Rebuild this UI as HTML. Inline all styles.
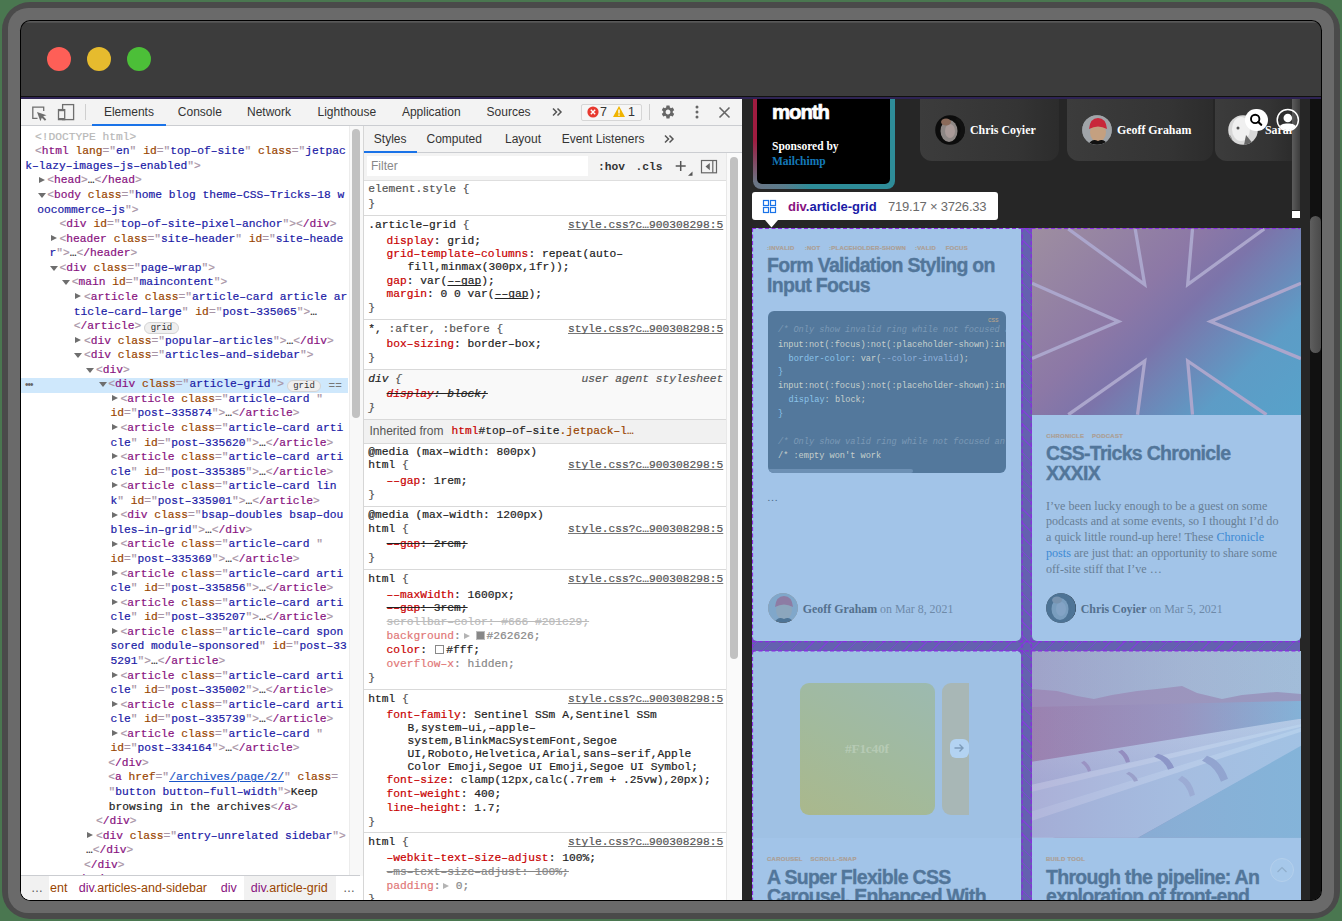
<!DOCTYPE html><html><head><meta charset="utf-8"><style>
*{box-sizing:border-box;margin:0;padding:0}
html,body{width:1342px;height:921px;overflow:hidden;background:#4a7750;position:relative;font-family:"Liberation Sans",sans-serif}
.abs{position:absolute}
.mono{font-family:"Liberation Mono",monospace}
.serif{font-family:"Liberation Serif",serif}
.ln{position:absolute;white-space:pre;font-family:"Liberation Mono",monospace;font-size:11.25px;line-height:14px;height:14px;color:#222;-webkit-text-stroke:0.2px currentColor}
.t{color:#a894a6}.n{color:#881280}.a{color:#994500}.v{color:#1a1aa6}.x{color:#222}
.tri{position:absolute;width:0;height:0}
.tr{border-top:3.6px solid transparent;border-bottom:3.6px solid transparent;border-left:6.4px solid #6e6e6e}
.td{border-left:4.2px solid transparent;border-right:4.2px solid transparent;border-top:5.6px solid #6e6e6e}
.sl{position:absolute;white-space:pre;font-family:"Liberation Mono",monospace;font-size:11.25px;line-height:14px;height:14px;color:#222;-webkit-text-stroke:0.2px currentColor}
.p{color:#c80000}
.lk{color:#545454;text-decoration:underline;text-decoration-color:#777;text-decoration-skip-ink:none}
.dim{opacity:.55}
.st{text-decoration:line-through}
.div{position:absolute;left:364px;width:362px;height:1px;background:#d9d9d9}
.badge{display:inline-block;font-family:"Liberation Mono",monospace;font-size:9px;line-height:10px;padding:0 5.3px;border:1px solid #d4d4d4;border-radius:6px;background:#efefef;color:#333;margin-left:3px;vertical-align:-0.5px;-webkit-text-stroke:0}
.tab{position:absolute;font-size:12px;line-height:14px;color:#333;white-space:pre}
.d{color:#b8b8b8}.lnk{color:#1a55c8;text-decoration:underline}.g{color:#555}.ul{text-decoration:underline;text-decoration-skip-ink:none}.sw{display:inline-block;width:9px;height:9px;border:1px solid #888;vertical-align:-1px;margin-right:2px}.tri2{display:inline-block;width:0;height:0;border-top:3.5px solid transparent;border-bottom:3.5px solid transparent;border-left:6px solid #777;margin:0 2px 0 1px;vertical-align:0px}</style></head><body><div class="abs" style="left:2px;top:2px;width:1338px;height:917px;background:#4a4a4a;border-radius:28px"></div><div class="abs" style="left:8px;top:8px;width:1326px;height:905px;background:#6a6a6a;border-radius:20px"></div><div class="abs" style="left:20px;top:20px;width:1302px;height:881px;background:#000;border-radius:10.5px"></div><div class="abs" style="left:21px;top:21px;width:1300px;height:879px;background:#3c3c3c;border-radius:9.5px;overflow:hidden"><div class="abs" style="left:26px;top:26px;width:24px;height:24px;border-radius:50%;background:#fe5f57"></div><div class="abs" style="left:66px;top:26px;width:24px;height:24px;border-radius:50%;background:#e6bb2e"></div><div class="abs" style="left:106px;top:26px;width:24px;height:24px;border-radius:50%;background:#4cbf38"></div><div class="abs" style="left:0;top:0;width:1300px;height:1.5px;background:linear-gradient(#5e5e5e,#4a4a4a)"></div></div><div class="abs" style="left:21px;top:21px;width:1300px;height:879px;border-radius:9.5px;overflow:hidden;pointer-events:none"><div class="abs" style="left:-21px;top:-21px;width:1342px;height:921px"><div class="abs" style="left:21px;top:96px;width:1300px;height:1px;background:#111"></div><div class="abs" style="left:21px;top:97px;width:1300px;height:2px;background:#2e2354"></div><div class="abs" style="left:21px;top:99px;width:721px;height:802px;background:#fff"></div><div class="abs" style="left:21px;top:99px;width:721px;height:27px;background:#f3f3f3;border-bottom:1px solid #cbcdd1"></div><svg class="abs" style="left:28px;top:101px" width="22" height="22" viewBox="0 0 22 22">
<path d="M9.5 17.4 H4.8 V6.2 H15.7 V10" fill="none" stroke="#6e6e6e" stroke-width="1.3"/>
<path d="M9 11 L18.5 14.2 L15.2 15.3 L18.3 18.4 L16.9 19.8 L13.8 16.7 L12.4 20.2 Z" fill="#6e6e6e"/>
</svg><svg class="abs" style="left:55px;top:101px" width="22" height="22" viewBox="0 0 22 22">
<rect x="7.6" y="3.6" width="11" height="15" fill="none" stroke="#6e6e6e" stroke-width="1.3"/>
<rect x="3.5" y="8.6" width="6.2" height="10" fill="#f3f3f3" stroke="#6e6e6e" stroke-width="1.3"/>
<rect x="3.5" y="8.6" width="6.2" height="1.6" fill="#6e6e6e"/><rect x="3.5" y="17" width="6.2" height="1.6" fill="#6e6e6e"/>
</svg><div class="abs" style="left:85px;top:104px;width:1px;height:16px;background:#cfcfcf"></div><div class="tab" style="left:103.9px;top:105px">Elements</div><div class="tab" style="left:177.8px;top:105px">Console</div><div class="tab" style="left:247px;top:105px">Network</div><div class="tab" style="left:317.5px;top:105px">Lighthouse</div><div class="tab" style="left:401.9px;top:105px">Application</div><div class="tab" style="left:486.6px;top:105px">Sources</div><div class="abs" style="left:92px;top:124px;width:74px;height:2px;background:#1a73e8"></div><svg class="abs" style="left:551px;top:106px" width="12" height="12" viewBox="0 0 12 12"><path d="M2 2.5 L5.5 6 L2 9.5 M6.5 2.5 L10 6 L6.5 9.5" fill="none" stroke="#555" stroke-width="1.5"/></svg><div class="abs" style="left:581px;top:103.5px;width:61px;height:17px;border:1px solid #d6d6d6;border-radius:2px;background:#f6f6f6"></div><svg class="abs" style="left:587px;top:106px" width="12" height="12" viewBox="0 0 12 12"><circle cx="6" cy="6" r="5.6" fill="#e8392f"/><path d="M3.8 3.8 L8.2 8.2 M8.2 3.8 L3.8 8.2" stroke="#fff" stroke-width="1.4"/></svg><div class="tab" style="left:600px;top:105px;font-size:12.5px;color:#333">7</div><svg class="abs" style="left:612px;top:105px" width="14" height="13" viewBox="0 0 14 13"><path d="M7 1 L13 12 H1 Z" fill="#f0b400"/><rect x="6.3" y="4.5" width="1.4" height="4" fill="#fff"/><rect x="6.3" y="9.4" width="1.4" height="1.4" fill="#fff"/></svg><div class="tab" style="left:628px;top:105px;font-size:12.5px;color:#333">1</div><div class="abs" style="left:649px;top:104px;width:1px;height:16px;background:#cfcfcf"></div><svg class="abs" style="left:660px;top:104px" width="16" height="16" viewBox="0 0 24 24"><path fill="#666" d="M19.14 12.94c.04-.3.06-.61.06-.94 0-.32-.02-.64-.07-.94l2.03-1.58a.49.49 0 0 0 .12-.61l-1.92-3.32a.488.488 0 0 0-.59-.22l-2.39.96c-.5-.38-1.03-.7-1.62-.94l-.36-2.54a.484.484 0 0 0-.48-.41h-3.84c-.24 0-.43.17-.47.41l-.36 2.54c-.59.24-1.13.57-1.62.94l-2.39-.96c-.22-.08-.47 0-.59.22L2.74 8.87c-.12.21-.08.47.12.61l2.03 1.58c-.05.3-.09.63-.09.94s.02.64.07.94l-2.03 1.58a.49.49 0 0 0-.12.61l1.92 3.32c.12.22.37.29.59.22l2.39-.96c.5.38 1.03.7 1.62.94l.36 2.54c.05.24.24.41.48.41h3.84c.24 0 .44-.17.47-.41l.36-2.54c.59-.24 1.13-.56 1.62-.94l2.39.96c.22.08.47 0 .59-.22l1.92-3.32c.12-.22.07-.47-.12-.61l-2.01-1.58zM12 15.6c-1.98 0-3.6-1.62-3.6-3.6s1.62-3.6 3.6-3.6 3.6 1.62 3.6 3.6-1.62 3.6-3.6 3.6z"/></svg><svg class="abs" style="left:693px;top:104px" width="8" height="16" viewBox="0 0 8 16"><circle cx="4" cy="3" r="1.5" fill="#666"/><circle cx="4" cy="8" r="1.5" fill="#666"/><circle cx="4" cy="13" r="1.5" fill="#666"/></svg><svg class="abs" style="left:718px;top:106px" width="13" height="13" viewBox="0 0 13 13"><path d="M1.5 1.5 L11.5 11.5 M11.5 1.5 L1.5 11.5" stroke="#666" stroke-width="1.6"/></svg><div class="abs" style="left:21px;top:378px;width:327px;height:15px;background:#cfe8fc"></div><div class="abs" style="left:25px;top:379px;font-size:10px;line-height:12px;color:#666;letter-spacing:-1px">•••</div><div class="ln" style="left:35px;top:129.80px"><span class="d">&lt;!DOCTYPE html&gt;</span></div><div class="ln" style="left:35px;top:144.36px"><span class="t">&lt;</span><span class="n">html</span> <span class="a">lang</span><span class="t">=&quot;</span><span class="v">en</span><span class="t">&quot;</span> <span class="a">id</span><span class="t">=&quot;</span><span class="v">top–of–site</span><span class="t">&quot;</span> <span class="a">class</span><span class="t">=&quot;</span><span class="v">jetpac</span></div><div class="ln" style="left:25.2px;top:158.92px"><span class="v">k–lazy–images–js–enabled</span><span class="t">&quot;&gt;</span></div><div class="ln" style="left:47.2px;top:173.48px"><span class="t">&lt;</span><span class="n">head</span><span class="t">&gt;</span><span class="x">…</span><span class="t">&lt;</span><span class="n">/head</span><span class="t">&gt;</span></div><div class="tri tr" style="left:38.6px;top:176.68px"></div><div class="ln" style="left:47.2px;top:188.04px"><span class="t">&lt;</span><span class="n">body</span> <span class="a">class</span><span class="t">=&quot;</span><span class="v">home blog theme–CSS–Tricks–18 w</span></div><div class="tri td" style="left:37.6px;top:192.84px"></div><div class="ln" style="left:37.2px;top:202.60px"><span class="v">oocommerce–js</span><span class="t">&quot;&gt;</span></div><div class="ln" style="left:59.6px;top:217.16px"><span class="t">&lt;</span><span class="n">div</span> <span class="a">id</span><span class="t">=&quot;</span><span class="v">top–of–site–pixel–anchor</span><span class="t">&quot;&gt;</span><span class="t">&lt;</span><span class="n">/div</span><span class="t">&gt;</span></div><div class="ln" style="left:59.6px;top:231.72px"><span class="t">&lt;</span><span class="n">header</span> <span class="a">class</span><span class="t">=&quot;</span><span class="v">site–header</span><span class="t">&quot;</span> <span class="a">id</span><span class="t">=&quot;</span><span class="v">site–heade</span></div><div class="tri tr" style="left:51.0px;top:234.92px"></div><div class="ln" style="left:49.4px;top:246.28px"><span class="v">r</span><span class="t">&quot;&gt;</span><span class="x">…</span><span class="t">&lt;</span><span class="n">/header</span><span class="t">&gt;</span></div><div class="ln" style="left:59.6px;top:260.84px"><span class="t">&lt;</span><span class="n">div</span> <span class="a">class</span><span class="t">=&quot;</span><span class="v">page–wrap</span><span class="t">&quot;&gt;</span></div><div class="tri td" style="left:50.0px;top:265.64px"></div><div class="ln" style="left:71.8px;top:275.40px"><span class="t">&lt;</span><span class="n">main</span> <span class="a">id</span><span class="t">=&quot;</span><span class="v">maincontent</span><span class="t">&quot;&gt;</span></div><div class="tri td" style="left:62.2px;top:280.20px"></div><div class="ln" style="left:83.9px;top:289.96px"><span class="t">&lt;</span><span class="n">article</span> <span class="a">class</span><span class="t">=&quot;</span><span class="v">article–card article ar</span></div><div class="tri tr" style="left:75.3px;top:293.16px"></div><div class="ln" style="left:73.8px;top:304.52px"><span class="v">ticle–card–large</span><span class="t">&quot;</span> <span class="a">id</span><span class="t">=&quot;</span><span class="v">post–335065</span><span class="t">&quot;&gt;</span><span class="x">…</span></div><div class="ln" style="left:73.8px;top:319.08px"><span class="t">&lt;</span><span class="n">/article</span><span class="t">&gt;</span><span class="badge">grid</span></div><div class="ln" style="left:83.9px;top:333.64px"><span class="t">&lt;</span><span class="n">div</span> <span class="a">class</span><span class="t">=&quot;</span><span class="v">popular–articles</span><span class="t">&quot;&gt;</span><span class="x">…</span><span class="t">&lt;</span><span class="n">/div</span><span class="t">&gt;</span></div><div class="tri tr" style="left:75.3px;top:336.84px"></div><div class="ln" style="left:83.9px;top:348.20px"><span class="t">&lt;</span><span class="n">div</span> <span class="a">class</span><span class="t">=&quot;</span><span class="v">articles–and–sidebar</span><span class="t">&quot;&gt;</span></div><div class="tri td" style="left:74.3px;top:353.00px"></div><div class="ln" style="left:96px;top:362.76px"><span class="t">&lt;</span><span class="n">div</span><span class="t">&gt;</span></div><div class="tri td" style="left:86.4px;top:367.56px"></div><div class="ln" style="left:108.3px;top:377.32px"><span class="t">&lt;</span><span class="n">div</span> <span class="a">class</span><span class="t">=&quot;</span><span class="v">article–grid</span><span class="t">&quot;&gt;</span><span class="badge">grid</span></div><div class="tri td" style="left:98.7px;top:382.12px"></div><div class="ln" style="left:120.4px;top:391.88px"><span class="t">&lt;</span><span class="n">article</span> <span class="a">class</span><span class="t">=&quot;</span><span class="v">article–card </span><span class="t">&quot;</span></div><div class="tri tr" style="left:111.8px;top:395.08px"></div><div class="ln" style="left:110.4px;top:406.44px"><span class="a">id</span><span class="t">=&quot;</span><span class="v">post–335874</span><span class="t">&quot;&gt;</span><span class="x">…</span><span class="t">&lt;</span><span class="n">/article</span><span class="t">&gt;</span></div><div class="ln" style="left:120.4px;top:421.00px"><span class="t">&lt;</span><span class="n">article</span> <span class="a">class</span><span class="t">=&quot;</span><span class="v">article–card arti</span></div><div class="tri tr" style="left:111.8px;top:424.20px"></div><div class="ln" style="left:110.4px;top:435.56px"><span class="v">cle</span><span class="t">&quot;</span> <span class="a">id</span><span class="t">=&quot;</span><span class="v">post–335620</span><span class="t">&quot;&gt;</span><span class="x">…</span><span class="t">&lt;</span><span class="n">/article</span><span class="t">&gt;</span></div><div class="ln" style="left:120.4px;top:450.12px"><span class="t">&lt;</span><span class="n">article</span> <span class="a">class</span><span class="t">=&quot;</span><span class="v">article–card arti</span></div><div class="tri tr" style="left:111.8px;top:453.32px"></div><div class="ln" style="left:110.4px;top:464.68px"><span class="v">cle</span><span class="t">&quot;</span> <span class="a">id</span><span class="t">=&quot;</span><span class="v">post–335385</span><span class="t">&quot;&gt;</span><span class="x">…</span><span class="t">&lt;</span><span class="n">/article</span><span class="t">&gt;</span></div><div class="ln" style="left:120.4px;top:479.24px"><span class="t">&lt;</span><span class="n">article</span> <span class="a">class</span><span class="t">=&quot;</span><span class="v">article–card lin</span></div><div class="tri tr" style="left:111.8px;top:482.44px"></div><div class="ln" style="left:110.4px;top:493.80px"><span class="v">k</span><span class="t">&quot;</span> <span class="a">id</span><span class="t">=&quot;</span><span class="v">post–335901</span><span class="t">&quot;&gt;</span><span class="x">…</span><span class="t">&lt;</span><span class="n">/article</span><span class="t">&gt;</span></div><div class="ln" style="left:120.4px;top:508.36px"><span class="t">&lt;</span><span class="n">div</span> <span class="a">class</span><span class="t">=&quot;</span><span class="v">bsap–doubles bsap–dou</span></div><div class="tri tr" style="left:111.8px;top:511.56px"></div><div class="ln" style="left:110.4px;top:522.92px"><span class="v">bles–in–grid</span><span class="t">&quot;&gt;</span><span class="x">…</span><span class="t">&lt;</span><span class="n">/div</span><span class="t">&gt;</span></div><div class="ln" style="left:120.4px;top:537.48px"><span class="t">&lt;</span><span class="n">article</span> <span class="a">class</span><span class="t">=&quot;</span><span class="v">article–card </span><span class="t">&quot;</span></div><div class="tri tr" style="left:111.8px;top:540.68px"></div><div class="ln" style="left:110.4px;top:552.04px"><span class="a">id</span><span class="t">=&quot;</span><span class="v">post–335369</span><span class="t">&quot;&gt;</span><span class="x">…</span><span class="t">&lt;</span><span class="n">/article</span><span class="t">&gt;</span></div><div class="ln" style="left:120.4px;top:566.60px"><span class="t">&lt;</span><span class="n">article</span> <span class="a">class</span><span class="t">=&quot;</span><span class="v">article–card arti</span></div><div class="tri tr" style="left:111.8px;top:569.80px"></div><div class="ln" style="left:110.4px;top:581.16px"><span class="v">cle</span><span class="t">&quot;</span> <span class="a">id</span><span class="t">=&quot;</span><span class="v">post–335856</span><span class="t">&quot;&gt;</span><span class="x">…</span><span class="t">&lt;</span><span class="n">/article</span><span class="t">&gt;</span></div><div class="ln" style="left:120.4px;top:595.72px"><span class="t">&lt;</span><span class="n">article</span> <span class="a">class</span><span class="t">=&quot;</span><span class="v">article–card arti</span></div><div class="tri tr" style="left:111.8px;top:598.92px"></div><div class="ln" style="left:110.4px;top:610.28px"><span class="v">cle</span><span class="t">&quot;</span> <span class="a">id</span><span class="t">=&quot;</span><span class="v">post–335207</span><span class="t">&quot;&gt;</span><span class="x">…</span><span class="t">&lt;</span><span class="n">/article</span><span class="t">&gt;</span></div><div class="ln" style="left:120.4px;top:624.84px"><span class="t">&lt;</span><span class="n">article</span> <span class="a">class</span><span class="t">=&quot;</span><span class="v">article–card spon</span></div><div class="tri tr" style="left:111.8px;top:628.04px"></div><div class="ln" style="left:110.4px;top:639.40px"><span class="v">sored module–sponsored</span><span class="t">&quot;</span> <span class="a">id</span><span class="t">=&quot;</span><span class="v">post–33</span></div><div class="ln" style="left:110.4px;top:653.96px"><span class="v">5291</span><span class="t">&quot;&gt;</span><span class="x">…</span><span class="t">&lt;</span><span class="n">/article</span><span class="t">&gt;</span></div><div class="ln" style="left:120.4px;top:668.52px"><span class="t">&lt;</span><span class="n">article</span> <span class="a">class</span><span class="t">=&quot;</span><span class="v">article–card arti</span></div><div class="tri tr" style="left:111.8px;top:671.72px"></div><div class="ln" style="left:110.4px;top:683.08px"><span class="v">cle</span><span class="t">&quot;</span> <span class="a">id</span><span class="t">=&quot;</span><span class="v">post–335002</span><span class="t">&quot;&gt;</span><span class="x">…</span><span class="t">&lt;</span><span class="n">/article</span><span class="t">&gt;</span></div><div class="ln" style="left:120.4px;top:697.64px"><span class="t">&lt;</span><span class="n">article</span> <span class="a">class</span><span class="t">=&quot;</span><span class="v">article–card arti</span></div><div class="tri tr" style="left:111.8px;top:700.84px"></div><div class="ln" style="left:110.4px;top:712.20px"><span class="v">cle</span><span class="t">&quot;</span> <span class="a">id</span><span class="t">=&quot;</span><span class="v">post–335739</span><span class="t">&quot;&gt;</span><span class="x">…</span><span class="t">&lt;</span><span class="n">/article</span><span class="t">&gt;</span></div><div class="ln" style="left:120.4px;top:726.76px"><span class="t">&lt;</span><span class="n">article</span> <span class="a">class</span><span class="t">=&quot;</span><span class="v">article–card </span><span class="t">&quot;</span></div><div class="tri tr" style="left:111.8px;top:729.96px"></div><div class="ln" style="left:110.4px;top:741.32px"><span class="a">id</span><span class="t">=&quot;</span><span class="v">post–334164</span><span class="t">&quot;&gt;</span><span class="x">…</span><span class="t">&lt;</span><span class="n">/article</span><span class="t">&gt;</span></div><div class="ln" style="left:108.3px;top:755.88px"><span class="t">&lt;</span><span class="n">/div</span><span class="t">&gt;</span></div><div class="ln" style="left:108.3px;top:770.44px"><span class="t">&lt;</span><span class="n">a</span> <span class="a">href</span><span class="t">=&quot;</span><span class="lnk">/archives/page/2/</span><span class="t">&quot;</span> <span class="a">class</span><span class="t">=</span></div><div class="ln" style="left:108.4px;top:785.00px"><span class="t">&quot;</span><span class="v">button button–full–width</span><span class="t">&quot;&gt;</span><span class="x">Keep</span></div><div class="ln" style="left:108.8px;top:799.56px"><span class="x">browsing in the archives</span><span class="t">&lt;</span><span class="n">/a</span><span class="t">&gt;</span></div><div class="ln" style="left:96px;top:814.12px"><span class="t">&lt;</span><span class="n">/div</span><span class="t">&gt;</span></div><div class="ln" style="left:96px;top:828.68px"><span class="t">&lt;</span><span class="n">div</span> <span class="a">class</span><span class="t">=&quot;</span><span class="v">entry–unrelated sidebar</span><span class="t">&quot;&gt;</span></div><div class="tri tr" style="left:87.4px;top:831.88px"></div><div class="ln" style="left:86px;top:843.24px"><span class="x">…</span><span class="t">&lt;</span><span class="n">/div</span><span class="t">&gt;</span></div><div class="ln" style="left:83.9px;top:857.80px"><span class="t">&lt;</span><span class="n">/div</span><span class="t">&gt;</span></div><div class="ln" style="left:71.8px;top:872.36px"><span class="t">&lt;</span><span class="n">/main</span><span class="t">&gt;</span></div><div class="abs" style="left:328.6px;top:379px;font-family:'Liberation Mono';font-size:11px;line-height:14px;color:#777">==</div><div class="abs" style="left:348.5px;top:126px;width:14.5px;height:750px;background:#f8f8f8;border-left:1px solid #ececec"></div><div class="abs" style="left:352px;top:129px;width:7.7px;height:289px;background:#c1c1c1;border-radius:4px"></div><div class="abs" style="left:363px;top:126px;width:1px;height:775px;background:#d6d6d6"></div><div class="abs" style="left:21px;top:875px;width:339px;height:26px;background:#fff;border-top:1px solid #cbcdd1"></div><div class="abs" style="left:21px;top:876px;width:28px;height:24px;background:#f1f1f1"></div><div class="abs" style="left:244px;top:876px;width:92px;height:24px;background:#f1f1f1"></div><div class="abs" style="left:31px;top:881px;font-size:12px;line-height:14px;color:#555">…</div><div class="abs" style="left:50px;top:881px;font-size:12.5px;line-height:14px;white-space:pre"><span style="color:#994500">ent</span></div><div class="abs" style="left:78.7px;top:881px;font-size:12.5px;line-height:14px;white-space:pre"><span style="color:#881280">div</span><span style="color:#994500">.articles-and-sidebar</span></div><div class="abs" style="left:220.8px;top:881px;font-size:12.5px;line-height:14px;white-space:pre"><span style="color:#881280">div</span></div><div class="abs" style="left:250.8px;top:881px;font-size:12.5px;line-height:14px;white-space:pre"><span style="color:#881280">div</span><span style="color:#994500">.article-grid</span></div><div class="abs" style="left:343px;top:881px;font-size:12px;line-height:14px;color:#555">…</div><div class="abs" style="left:364px;top:126px;width:378px;height:27px;background:#f3f3f3;border-bottom:1px solid #cbcdd1"></div><div class="tab" style="left:373.8px;top:131.5px">Styles</div><div class="tab" style="left:426.5px;top:131.5px">Computed</div><div class="tab" style="left:505px;top:131.5px">Layout</div><div class="tab" style="left:561.7px;top:131.5px">Event Listeners</div><svg class="abs" style="left:663px;top:132.5px" width="12" height="12" viewBox="0 0 12 12"><path d="M2 2.5 L5.5 6 L2 9.5 M6.5 2.5 L10 6 L6.5 9.5" fill="none" stroke="#555" stroke-width="1.5"/></svg><div class="abs" style="left:364px;top:150.5px;width:53px;height:2px;background:#1a73e8"></div><div class="abs" style="left:364px;top:153px;width:362px;height:28px;background:#f3f3f3;border-bottom:1px solid #dedede"></div><div class="abs" style="left:367px;top:156px;width:221px;height:20px;background:#fff"></div><div class="abs" style="left:371px;top:159px;font-size:12px;line-height:14px;color:#888">Filter</div><div class="abs mono" style="left:598px;top:159.6px;font-size:11.25px;line-height:14px;font-weight:bold;color:#333;white-space:pre">:hov</div><div class="abs mono" style="left:635.5px;top:159.6px;font-size:11.25px;line-height:14px;font-weight:bold;color:#333;white-space:pre">.cls</div><svg class="abs" style="left:673px;top:158px" width="20" height="20" viewBox="0 0 20 20"><path d="M7.7 3 V13 M2.7 8 H12.7" stroke="#555" stroke-width="1.5"/><path d="M19.5 13.5 V17.8 H15 Z" fill="#555"/></svg><svg class="abs" style="left:700px;top:158px" width="18" height="16" viewBox="0 0 18 16"><rect x="1.5" y="2.5" width="15" height="12.3" fill="none" stroke="#666" stroke-width="1.2"/><path d="M12.8 2.5 V14.8" stroke="#666" stroke-width="1.2"/><path d="M9.8 5 V12.2 L5.5 8.6 Z" fill="#666"/></svg><div class="abs" style="left:364px;top:181px;width:362px;height:720px;background:#fff"></div><div class="abs" style="left:726px;top:153px;width:16px;height:748px;background:#fafafa;border-left:1px solid #e8e8e8"></div><div class="abs" style="left:730px;top:157px;width:8px;height:502px;background:#c1c1c1;border-radius:4px"></div><div class="abs" style="left:364px;top:369.5px;width:362px;height:50px;background:#f9f9f9"></div><div class="abs" style="left:364px;top:419.5px;width:362px;height:24px;background:#f1f1f1"></div><div class="div" style="top:214.8px"></div><div class="div" style="top:318.5px"></div><div class="div" style="top:368.7px"></div><div class="div" style="top:418.5px"></div><div class="div" style="top:443.0px"></div><div class="div" style="top:506.0px"></div><div class="div" style="top:569.1px"></div><div class="div" style="top:689.0px"></div><div class="div" style="top:831.5px"></div><div class="sl" style="left:368.2px;top:181.6px;"><span class="g">element.style {</span></div><div class="sl" style="left:368.2px;top:196.9px;"><span class="g">}</span></div><div class="sl" style="left:368.2px;top:217.6px;">.article–grid <span class="g">{</span></div><div class="sl lk" style="left:568.0px;top:217.6px">style.css?c…900308298:5</div><div class="sl" style="left:386.6px;top:233.7px;"><span class="p">display</span>: grid;</div><div class="sl" style="left:386.6px;top:247.1px;"><span class="p">grid–template–columns</span>: repeat(auto–</div><div class="sl" style="left:407.6px;top:260.1px;">fill,minmax(300px,1fr));</div><div class="sl" style="left:386.6px;top:273.7px;"><span class="p">gap</span>: var(<span class="ul">––gap</span>);</div><div class="sl" style="left:386.6px;top:286.9px;"><span class="p">margin</span>: 0 0 var(<span class="ul">––gap</span>);</div><div class="sl" style="left:368.2px;top:300.5px;"><span class="g">}</span></div><div class="sl" style="left:368.2px;top:321.5px;">*, <span class="g">:after, :before {</span></div><div class="sl lk" style="left:568.0px;top:321.5px">style.css?c…900308298:5</div><div class="sl" style="left:386.6px;top:337.3px;"><span class="p">box–sizing</span>: border–box;</div><div class="sl" style="left:368.2px;top:350.8px;"><span class="g">}</span></div><div class="sl" style="left:368.2px;top:371.6px;"><i>div <span class="g">{</span></i></div><div class="sl" style="left:581.5px;top:371.6px;color:#555"><i>user agent stylesheet</i></div><div class="sl" style="left:386.6px;top:387.4px;"><i class="st"><span class="p">display</span>: block;</i></div><div class="sl" style="left:368.2px;top:401.1px;"><i><span class="g">}</span></i></div><div class="abs" style="left:369.5px;top:424px;font-size:12px;line-height:14px;color:#555;white-space:pre">Inherited from </div><div class="sl" style="left:451.5px;top:423.6px;"><span class="p">html</span>#top–of–site<span class="a">.jetpack–l…</span></div><div class="sl" style="left:368.2px;top:444.8px;">@media (max–width: 800px)</div><div class="sl" style="left:368.2px;top:458.0px;">html <span class="g">{</span></div><div class="sl lk" style="left:568.0px;top:458.0px">style.css?c…900308298:5</div><div class="sl" style="left:386.6px;top:474.1px;"><span class="p">––gap</span>: 1rem;</div><div class="sl" style="left:368.2px;top:487.9px;"><span class="g">}</span></div><div class="sl" style="left:368.2px;top:508.4px;">@media (max–width: 1200px)</div><div class="sl" style="left:368.2px;top:521.6px;">html <span class="g">{</span></div><div class="sl lk" style="left:568.0px;top:521.6px">style.css?c…900308298:5</div><div class="sl" style="left:386.6px;top:537.1px;"><span class="st"><span class="p">––gap</span>: 2rem;</span></div><div class="sl" style="left:368.2px;top:550.9px;"><span class="g">}</span></div><div class="sl" style="left:368.2px;top:571.5px;">html <span class="g">{</span></div><div class="sl lk" style="left:568.0px;top:571.5px">style.css?c…900308298:5</div><div class="sl" style="left:386.6px;top:587.6px;"><span class="p">––maxWidth</span>: 1600px;</div><div class="sl" style="left:386.6px;top:600.8px;"><span class="st"><span class="p">––gap</span>: 3rem;</span></div><div class="sl" style="left:386.6px;top:614.9px;"><span class="st" style="color:#bbb">scrollbar–color: #666 #201c29;</span></div><div class="sl" style="left:386.6px;top:629.1px;"><span class="dim"><span class="p">background</span>:<span class="tri2" style="margin:0 0 0 3px"></span><span class="sw" style="background:#262626;margin:0 1.5px 0 6px"></span>#262626;</span></div><div class="sl" style="left:386.6px;top:643.1px;"><span class="p">color</span>:<span class="sw" style="background:#fff;margin:0 2.5px 0 7.5px"></span>#fff;</div><div class="sl" style="left:386.6px;top:657.1px;"><span class="dim"><span class="p">overflow–x</span>: hidden;</span></div><div class="sl" style="left:368.2px;top:670.6px;"><span class="g">}</span></div><div class="sl" style="left:368.2px;top:691.9px;">html <span class="g">{</span></div><div class="sl lk" style="left:568.0px;top:691.9px">style.css?c…900308298:5</div><div class="sl" style="left:386.6px;top:708.3px;"><span class="p">font–family</span>: Sentinel SSm A,Sentinel SSm</div><div class="sl" style="left:407.6px;top:721.2px;">B,system–ui,–apple–</div><div class="sl" style="left:407.6px;top:734.1px;">system,BlinkMacSystemFont,Segoe</div><div class="sl" style="left:407.6px;top:746.9px;">UI,Roboto,Helvetica,Arial,sans–serif,Apple</div><div class="sl" style="left:407.6px;top:759.9px;">Color Emoji,Segoe UI Emoji,Segoe UI Symbol;</div><div class="sl" style="left:386.6px;top:772.9px;"><span class="p">font–size</span>: clamp(12px,calc(.7rem + .25vw),20px);</div><div class="sl" style="left:386.6px;top:786.6px;"><span class="p">font–weight</span>: 400;</div><div class="sl" style="left:386.6px;top:800.7px;"><span class="p">line–height</span>: 1.7;</div><div class="sl" style="left:368.2px;top:814.5px;"><span class="g">}</span></div><div class="sl" style="left:368.2px;top:835.1px;">html <span class="g">{</span></div><div class="sl lk" style="left:568.0px;top:835.1px">style.css?c…900308298:5</div><div class="sl" style="left:386.6px;top:851.2px;"><span class="p">–webkit–text–size–adjust</span>: 100%;</div><div class="sl" style="left:386.6px;top:864.7px;"><span class="st dim">–ms–text–size–adjust: 100%;</span></div><div class="sl" style="left:386.6px;top:878.9px;"><span class="dim"><span class="p">padding</span>:<span class="tri2" style="margin:0 0 0 2.4px"></span> 0;</span></div><div class="sl" style="left:368.2px;top:892.4px;"><span class="g">}</span></div><div class="abs" style="left:742px;top:99px;width:580px;height:802px;background:#262626;overflow:hidden"><div class="abs" style="left:11.0px;top:-59.0px;width:141.6px;height:148.6px;border-radius:8px;background:linear-gradient(to right,#6c7484 0,#587c8c 22%,#2e8c98 40%,#2e8c98 100%)"></div><div class="abs" style="left:11.0px;top:-59.0px;width:4.0px;height:142.0px;background:linear-gradient(to bottom,#a01c40 0,#a01c40 100px,#8a3a58 115px,#6c7484 100%)"></div><div class="abs" style="left:14.9px;top:-59.0px;width:133.5px;height:143.8px;border-radius:5px;background:#000"></div><div class="abs" style="left:30.0px;top:0.2px;white-space:pre;font-size:20.4px;line-height:26px;font-weight:bold;color:#fff;letter-spacing:-1.1px;-webkit-text-stroke:0.7px #fff">month</div><div class="abs" style="left:30.0px;top:40.0px;white-space:pre;font-family:'Liberation Serif',serif;font-size:11.5px;line-height:14px;font-weight:bold;color:#fff">Sponsored by</div><div class="abs" style="left:30.0px;top:54.5px;white-space:pre;font-family:'Liberation Serif',serif;font-size:11.5px;line-height:14px;font-weight:bold;color:#1478b8">Mailchimp</div><div class="abs" style="left:178.0px;top:-39.0px;width:139.0px;height:101.4px;border-radius:12px;background:linear-gradient(to right,#3c3c3c,#343434 70%,#2c2c2c)"></div><div class="abs" style="left:325.0px;top:-39.0px;width:146.0px;height:101.4px;border-radius:12px;background:linear-gradient(to right,#3c3c3c,#343434 70%,#2c2c2c)"></div><div class="abs" style="left:473.0px;top:-39.0px;width:77.0px;height:101.4px;border-radius:12px 0 0 12px;background:linear-gradient(to right,#3c3c3c,#343434 70%,#2c2c2c)"></div><svg class="abs" style="left:193.3px;top:15.8px" width="30" height="30" viewBox="0 0 30 30"><defs><clipPath id="c950"><circle cx="15" cy="15" r="14.8"/></clipPath></defs><g clip-path="url(#c950)"><rect width="30" height="30" fill="#0c0c0c"/><ellipse cx="14" cy="16" rx="8.5" ry="11" fill="#8d8785"/><ellipse cx="15" cy="16" rx="5" ry="7" fill="#a99a98"/><ellipse cx="11" cy="7" rx="5" ry="3.5" fill="#8a6a5a"/><path d="M20 4 Q28 10 24 22 L30 30 V0Z" fill="#111"/></g></svg><svg class="abs" style="left:340.0px;top:15.8px" width="30" height="30" viewBox="0 0 30 30"><defs><clipPath id="c1097"><circle cx="15" cy="15" r="14.8"/></clipPath></defs><g clip-path="url(#c1097)"><rect width="30" height="30" fill="#8c9298"/><path d="M0 0 H30 V30 H0Z" fill="#a0a4a8"/><ellipse cx="16" cy="17" rx="8" ry="10" fill="#c4a080"/><path d="M7 14 Q8 3 16 3 Q24 3 25 14 Q16 9 7 14Z" fill="#c8283a"/><path d="M6 30 Q10 23 16 26 Q22 23 26 30Z" fill="#111"/></g></svg><svg class="abs" style="left:485.8px;top:16.0px" width="30" height="30" viewBox="0 0 30 30"><defs><clipPath id="c1242"><circle cx="15" cy="15" r="14.8"/></clipPath></defs><g clip-path="url(#c1242)"><rect width="30" height="30" fill="#d8d8d8"/><ellipse cx="13" cy="14" rx="9" ry="12" fill="#f0f0f0"/><circle cx="10" cy="13" r="1.5" fill="#555"/><path d="M18 20 L26 30 H16Z" fill="#666"/><path d="M2 20 Q6 26 4 30 H0V20Z" fill="#888"/></g></svg><div class="abs" style="left:228.0px;top:23.5px;white-space:pre;font-family:'Liberation Serif',serif;font-size:11.9px;line-height:14px;font-weight:bold;color:#fff">Chris Coyier</div><div class="abs" style="left:375.0px;top:23.5px;white-space:pre;font-family:'Liberation Serif',serif;font-size:11.9px;line-height:14px;font-weight:bold;color:#fff">Geoff Graham</div><div class="abs" style="left:523.0px;top:23.5px;white-space:pre;font-family:'Liberation Serif',serif;font-size:11.9px;line-height:14px;font-weight:bold;color:#fff">Sarah</div><div class="abs" style="left:550.0px;top:0.0px;width:8.0px;height:111.0px;background:linear-gradient(to right,#5c5c5c,#3c3c3c)"></div><div class="abs" style="left:550.0px;top:111.7px;width:8.0px;height:7.3px;background:#fff"></div><div class="abs" style="left:502.8px;top:9.5px;width:22.8px;height:22.8px;border-radius:50%;background:#fff"></div><svg class="abs" style="left:506px;top:12px" width="16" height="16" viewBox="0 0 16 16"><circle cx="7.2" cy="7.9" r="4.2" fill="none" stroke="#000" stroke-width="1.9"/><path d="M10.3 11 L13.2 13.8" stroke="#000" stroke-width="2.2" stroke-linecap="round"/></svg><svg class="abs" style="left:534px;top:8.5px" width="24" height="24" viewBox="0 0 24 24"><defs><clipPath id="uc"><circle cx="11.8" cy="12" r="10.2"/></clipPath></defs><circle cx="11.8" cy="12" r="10.6" fill="none" stroke="#fff" stroke-width="1.5"/><circle cx="11.8" cy="10" r="4.3" fill="#fff"/><g clip-path="url(#uc)"><path d="M2 23 C3 16 7 15.5 11.8 15.5 C16.6 15.5 20.6 16 21.6 23Z" fill="#fff"/></g></svg><div class="abs" style="left:568.0px;top:0.0px;width:12.0px;height:802.0px;background:#111"></div><div class="abs" style="left:568.2px;top:116.8px;width:11.0px;height:137.2px;background:linear-gradient(to right,#5e5e5e,#4a4a4a);border-radius:5.5px"></div><div class="abs" style="left:10.4px;top:93.3px;width:245.3px;height:27.4px;background:#fff;border-radius:3px"></div><svg class="abs" style="left:22.5px;top:121px" width="13" height="8" viewBox="0 0 13 8"><path d="M0 0 H13 L6.5 7.5 Z" fill="#fff"/></svg><svg class="abs" style="left:20px;top:100px" width="15" height="15" viewBox="0 0 15 15"><g fill="none" stroke="#1a73e8" stroke-width="1.2"><rect x="1.5" y="1.5" width="5" height="5"/><rect x="8.5" y="1.5" width="5" height="5"/><rect x="1.5" y="8.5" width="5" height="5"/><rect x="8.5" y="8.5" width="5" height="5"/></g></svg><div class="abs" style="left:46.0px;top:100.0px;white-space:pre;font-size:13px;line-height:15px;font-weight:bold"><span style="color:#881280">div</span><span style="color:#1a1aa6">.article-grid</span></div><div class="abs" style="left:146.0px;top:100.0px;white-space:pre;font-size:13px;line-height:15px;color:#6a6a6a;letter-spacing:-0.2px">719.17 × 3726.33</div><div class="abs" style="left:9.8px;top:129.0px;width:548.7px;height:677.0px;background:#6461b0"></div><div class="abs" style="left:279.5px;top:129.0px;width:10.0px;height:677.0px;background:repeating-linear-gradient(45deg,rgba(140,50,235,.6) 0 1px,transparent 1px 10px)"></div><div class="abs" style="left:9.8px;top:542.2px;width:548.7px;height:10.1px;background:repeating-linear-gradient(-45deg,rgba(140,50,235,.6) 0 1px,transparent 1px 10px)"></div><div class="abs" style="left:9.8px;top:129.0px;width:269.7px;height:413.2px;background:#a2c4e8;border-radius:0 0 5px 5px"></div><div class="abs" style="left:25.0px;top:144.7px;white-space:pre;font-family:'Liberation Sans',sans-serif;font-size:6px;line-height:9px;font-weight:bold;color:#ac9f95;letter-spacing:.25px;-webkit-text-stroke:0.2px #ac9f95">:INVALID</div><div class="abs" style="left:62.7px;top:144.7px;white-space:pre;font-family:'Liberation Sans',sans-serif;font-size:6px;line-height:9px;font-weight:bold;color:#ac9f95;letter-spacing:.25px;-webkit-text-stroke:0.2px #ac9f95">:NOT</div><div class="abs" style="left:87.0px;top:144.7px;white-space:pre;font-family:'Liberation Sans',sans-serif;font-size:6px;line-height:9px;font-weight:bold;color:#ac9f95;letter-spacing:.25px;-webkit-text-stroke:0.2px #ac9f95">:PLACEHOLDER-SHOWN</div><div class="abs" style="left:173.0px;top:144.7px;white-space:pre;font-family:'Liberation Sans',sans-serif;font-size:6px;line-height:9px;font-weight:bold;color:#ac9f95;letter-spacing:.25px;-webkit-text-stroke:0.2px #ac9f95">:VALID</div><div class="abs" style="left:203.7px;top:144.7px;white-space:pre;font-family:'Liberation Sans',sans-serif;font-size:6px;line-height:9px;font-weight:bold;color:#ac9f95;letter-spacing:.25px;-webkit-text-stroke:0.2px #ac9f95">FOCUS</div><div class="abs" style="left:25.0px;top:155.0px;white-space:pre;font-family:'Liberation Sans',sans-serif;font-size:19.5px;line-height:22px;font-weight:bold;color:#52769a;letter-spacing:-0.7px;-webkit-text-stroke:0.35px #52769a">Form Validation Styling on</div><div class="abs" style="left:25.0px;top:175.0px;white-space:pre;font-family:'Liberation Sans',sans-serif;font-size:19.5px;line-height:22px;font-weight:bold;color:#52769a;letter-spacing:-0.7px;-webkit-text-stroke:0.35px #52769a">Input Focus</div><div class="abs" style="left:25.7px;top:211.8px;width:238.2px;height:162.6px;background:#53789c;border-radius:6px;overflow:hidden"></div><div class="abs" style="left:246.0px;top:215.5px;white-space:pre;font-family:'Liberation Sans',sans-serif;font-size:7px;line-height:9px;color:#b8a48c">css</div><div class="abs" style="left:25.700000000000045px;top:211.8px;width:238.19999999999993px;height:162.59999999999997px;overflow:hidden;border-radius:6px"><div class="abs" style="left:10.3px;top:13.6px;white-space:pre;font-family:'Liberation Mono',monospace;font-size:8.6px;line-height:12px"><span style="color:#7b98b6;font-style:italic">/* Only show invalid ring while not focused an</span></div><div class="abs" style="left:10.3px;top:27.9px;white-space:pre;font-family:'Liberation Mono',monospace;font-size:8.6px;line-height:12px"><span style="color:#c6d0cc">input:not(:focus):not(:placeholder-shown):in</span></div><div class="abs" style="left:20.8px;top:41.8px;white-space:pre;font-family:'Liberation Mono',monospace;font-size:8.6px;line-height:12px"><span style="color:#8cc4ea">border-color</span><span style="color:#c6d0cc">: var(</span><span style="color:#8fb0da">--color-invalid</span><span style="color:#c6d0cc">);</span></div><div class="abs" style="left:10.3px;top:55.6px;white-space:pre;font-family:'Liberation Mono',monospace;font-size:8.6px;line-height:12px"><span style="color:#8cc4ea">}</span></div><div class="abs" style="left:10.3px;top:69.2px;white-space:pre;font-family:'Liberation Mono',monospace;font-size:8.6px;line-height:12px"><span style="color:#c6d0cc">input:not(:focus):not(:placeholder-shown):in</span></div><div class="abs" style="left:20.8px;top:83.6px;white-space:pre;font-family:'Liberation Mono',monospace;font-size:8.6px;line-height:12px"><span style="color:#8cc4ea">display</span><span style="color:#c6d0cc">: block;</span></div><div class="abs" style="left:10.3px;top:97.4px;white-space:pre;font-family:'Liberation Mono',monospace;font-size:8.6px;line-height:12px"><span style="color:#8cc4ea">}</span></div><div class="abs" style="left:10.3px;top:125.2px;white-space:pre;font-family:'Liberation Mono',monospace;font-size:8.6px;line-height:12px"><span style="color:#7b98b6;font-style:italic">/* Only show valid ring while not focused an</span></div><div class="abs" style="left:10.3px;top:139.6px;white-space:pre;font-family:'Liberation Mono',monospace;font-size:8.6px;line-height:12px"><span style="color:#c6d0cc">/* :empty won't work</span></div><div class="abs" style="left:0;top:158.7px;width:145.29999999999995px;height:4px;background:#6d90b4;border-radius:2px"></div></div><div class="abs" style="left:25.0px;top:392.0px;white-space:pre;font-family:'Liberation Serif',serif;font-size:11px;line-height:12px;color:#4a6a8a">…</div><svg class="abs" style="left:25.8px;top:493.6px" width="30" height="30" viewBox="0 0 30 30"><defs><clipPath id="c782"><circle cx="15" cy="15" r="14.8"/></clipPath></defs><g clip-path="url(#c782)"><rect width="30" height="30" fill="#8c9298"/><path d="M0 0 H30 V30 H0Z" fill="#a0a4a8"/><ellipse cx="16" cy="17" rx="8" ry="10" fill="#c4a080"/><path d="M7 14 Q8 3 16 3 Q24 3 25 14 Q16 9 7 14Z" fill="#c8283a"/><path d="M6 30 Q10 23 16 26 Q22 23 26 30Z" fill="#111"/><rect width="30" height="30" fill="rgb(111,168,220)" fill-opacity=".66"/></g></svg><div class="abs" style="left:60.8px;top:502.6px;white-space:pre;font-family:'Liberation Serif',serif;font-size:11.9px;line-height:15px;color:#6e8aa8"><b style="color:#54708e">Geoff Graham</b> on Mar 8, 2021</div><div class="abs" style="left:289.5px;top:129.0px;width:269.0px;height:413.2px;background:#a2c4e8;border-radius:0 0 5px 5px"></div><div class="abs" style="left:289.5px;top:129.0px;width:269.0px;height:186.7px;background:linear-gradient(135deg,#9e8ea0 0%,#8c78a6 38%,#7c74aa 52%,#5d9cc6 78%,#57a2ca 100%)"></div><svg class="abs" style="left:289.5px;top:129px" width="269.0" height="186.7"><path d="M36.3,1.0 L112.7,56.5 L103.2,1.0" fill="none" stroke="#aba6cc" stroke-width="3.3" stroke-linejoin="miter"/><path d="M160.5,1.0 L155.7,56.5 L232.2,1.0" fill="none" stroke="#aba6cc" stroke-width="3.3" stroke-linejoin="miter"/><path d="M0.0,55.3 L86.5,93.5 L0.0,130.6" fill="none" stroke="#aba6cc" stroke-width="3.3" stroke-linejoin="miter"/><path d="M269.0,55.3 L178.5,93.5 L269.0,130.6" fill="none" stroke="#aba6cc" stroke-width="3.3" stroke-linejoin="miter"/><path d="M36.3,186.7 L112.7,133.0 L105.5,186.7" fill="none" stroke="#aba6cc" stroke-width="3.3" stroke-linejoin="miter"/><path d="M160.5,186.7 L155.7,133.0 L234.5,186.7" fill="none" stroke="#aba6cc" stroke-width="3.3" stroke-linejoin="miter"/></svg><div class="abs" style="left:304.3px;top:333.0px;white-space:pre;font-family:'Liberation Sans',sans-serif;font-size:6px;line-height:9px;font-weight:bold;color:#ac9f95;letter-spacing:.25px;-webkit-text-stroke:0.2px #ac9f95">CHRONICLE</div><div class="abs" style="left:350.0px;top:333.0px;white-space:pre;font-family:'Liberation Sans',sans-serif;font-size:6px;line-height:9px;font-weight:bold;color:#ac9f95;letter-spacing:.25px;-webkit-text-stroke:0.2px #ac9f95">PODCAST</div><div class="abs" style="left:304.0px;top:343.4px;white-space:pre;font-family:'Liberation Sans',sans-serif;font-size:19.5px;line-height:22px;font-weight:bold;color:#52769a;letter-spacing:-0.7px;-webkit-text-stroke:0.35px #52769a">CSS-Tricks Chronicle</div><div class="abs" style="left:304.0px;top:363.0px;white-space:pre;font-family:'Liberation Sans',sans-serif;font-size:19.5px;line-height:22px;font-weight:bold;color:#52769a;letter-spacing:-0.7px;-webkit-text-stroke:0.35px #52769a">XXXIX</div><div class="abs" style="left:304.0px;top:398.5px;white-space:pre;font-family:'Liberation Serif',serif;font-size:12.1px;line-height:16px;color:#687f96">I’ve been lucky enough to be a guest on some</div><div class="abs" style="left:304.0px;top:414.4px;white-space:pre;font-family:'Liberation Serif',serif;font-size:12.1px;line-height:16px;color:#687f96">podcasts and at some events, so I thought I’d do</div><div class="abs" style="left:304.0px;top:430.3px;white-space:pre;font-family:'Liberation Serif',serif;font-size:12.1px;line-height:16px;color:#687f96">a quick little round-up here! These <span style="color:#3d8ad4">Chronicle</span></div><div class="abs" style="left:304.0px;top:446.2px;white-space:pre;font-family:'Liberation Serif',serif;font-size:12.1px;line-height:16px;color:#687f96"><span style="color:#3d8ad4">posts</span> are just that: an opportunity to share some</div><div class="abs" style="left:304.0px;top:462.1px;white-space:pre;font-family:'Liberation Serif',serif;font-size:12.1px;line-height:16px;color:#687f96">off-site stiff that I’ve …</div><svg class="abs" style="left:303.7px;top:493.6px" width="30" height="30" viewBox="0 0 30 30"><defs><clipPath id="c1060"><circle cx="15" cy="15" r="14.8"/></clipPath></defs><g clip-path="url(#c1060)"><rect width="30" height="30" fill="#0c0c0c"/><ellipse cx="14" cy="16" rx="8.5" ry="11" fill="#8d8785"/><ellipse cx="15" cy="16" rx="5" ry="7" fill="#a99a98"/><ellipse cx="11" cy="7" rx="5" ry="3.5" fill="#8a6a5a"/><path d="M20 4 Q28 10 24 22 L30 30 V0Z" fill="#111"/><rect width="30" height="30" fill="rgb(111,168,220)" fill-opacity=".66"/></g></svg><div class="abs" style="left:338.7px;top:502.6px;white-space:pre;font-family:'Liberation Serif',serif;font-size:11.9px;line-height:15px;color:#6e8aa8"><b style="color:#54708e">Chris Coyier</b> on Mar 5, 2021</div><div class="abs" style="left:9.8px;top:552.3px;width:269.7px;height:253.7px;background:#a2c4e8;border-radius:5px 5px 0 0"></div><div class="abs" style="left:9.8px;top:552.3px;width:269.7px;height:186.7px;background:#9fc1e4;border-radius:5px 5px 0 0"></div><div class="abs" style="left:57.7px;top:583.6px;width:135.2px;height:132.0px;background:linear-gradient(30deg,#aab88c 0%,#a2ba9c 45%,#9cbab0 100%);border-radius:9px"></div><div class="abs" style="left:103.0px;top:640.5px;white-space:pre;font-family:'Liberation Serif',serif;font-size:13.5px;line-height:18px;font-weight:bold;color:#b6cab4;letter-spacing:-.3px">#F1c40f</div><div class="abs" style="left:200.0px;top:583.6px;width:26.8px;height:132.0px;background:#a8b7b6;border-radius:9px 0 0 9px"></div><div class="abs" style="left:208.0px;top:639.5px;width:19.0px;height:19.0px;background:#b3d3f2;border-radius:6px"></div><svg class="abs" style="left:210px;top:642px" width="14" height="14" viewBox="0 0 14 14"><path d="M2.5 7 H11 M7.5 3.5 L11 7 L7.5 10.5" fill="none" stroke="#7d9cba" stroke-width="1.4"/></svg><div class="abs" style="left:25.0px;top:755.8px;white-space:pre;font-family:'Liberation Sans',sans-serif;font-size:6px;line-height:9px;font-weight:bold;color:#ac9f95;letter-spacing:.25px;-webkit-text-stroke:0.2px #ac9f95">CAROUSEL</div><div class="abs" style="left:68.6px;top:755.8px;white-space:pre;font-family:'Liberation Sans',sans-serif;font-size:6px;line-height:9px;font-weight:bold;color:#ac9f95;letter-spacing:.25px;-webkit-text-stroke:0.2px #ac9f95">SCROLL-SNAP</div><div class="abs" style="left:25.0px;top:766.5px;white-space:pre;font-family:'Liberation Sans',sans-serif;font-size:19.5px;line-height:22px;font-weight:bold;color:#52769a;letter-spacing:-0.7px;-webkit-text-stroke:0.35px #52769a">A Super Flexible CSS</div><div class="abs" style="left:25.0px;top:786.0px;white-space:pre;font-family:'Liberation Sans',sans-serif;font-size:19.5px;line-height:22px;font-weight:bold;color:#52769a;letter-spacing:-0.7px;-webkit-text-stroke:0.35px #52769a">Carousel, Enhanced With</div><div class="abs" style="left:289.5px;top:552.3px;width:269.0px;height:253.7px;background:#a2c4e8;border-radius:5px 5px 0 0"></div><svg class="abs" style="left:289.5px;top:552.3px" width="269.0" height="186.70000000000005" viewBox="0 0 269 187" preserveAspectRatio="none">
<defs><linearGradient id="sky" x1="0" y1="0" x2="1" y2="0"><stop offset="0" stop-color="#a2b6d2"/><stop offset="1" stop-color="#a9bed8"/></linearGradient>
<linearGradient id="land" x1="0" y1="0" x2="1" y2="0"><stop offset="0" stop-color="#9c88b0"/><stop offset="0.55" stop-color="#9a96c0"/><stop offset="1" stop-color="#88b2d6"/></linearGradient>
<linearGradient id="p1" x1="0" y1="0" x2="0" y2="1"><stop offset="0" stop-color="#bccce6"/><stop offset="1" stop-color="#a4b8dc"/></linearGradient>
<linearGradient id="tint" x1="0" y1="0" x2="1" y2="0"><stop offset="0" stop-color="#9870b0" stop-opacity=".28"/><stop offset="0.6" stop-color="#8a90c8" stop-opacity=".12"/><stop offset="1" stop-color="#60b0e0" stop-opacity=".1"/></linearGradient></defs>
<rect width="269" height="187" fill="url(#sky)"/>
<path d="M0 38 L25 40 L45 45 L62 48 L80 44 L105 40 L125 38 L150 35 L165 42 L190 48 L210 44 L245 41 L269 43 V70 H0Z" fill="#9e96bc"/>
<path d="M0 56 L269 50 V187 H0Z" fill="url(#land)"/>
<path d="M0 111 L267 68 L269 68 V88 L0 150Z" fill="url(#p1)"/>
<path d="M0 134 L269 73 V94 L0 195Z" fill="#b2c8e6"/>
<path d="M0 134 L269 73 V76 L0 141Z" fill="#c2d4ec"/>
<path d="M0 160.5 L269 77 V96 L106 187 H0Z" fill="#a9c4e4"/>
<path d="M0 160.5 L269 77 V81 L0 170Z" fill="#bcd2ec"/>
<path d="M106 187 L269 95 V187Z" fill="#88b4d8"/>
<path d="M90 99 Q97 104 98 111 L94 112 Q92 105 86 101Z" fill="#9490c0"/>
<path d="M126 103 Q138 106 142 117 L136 119 Q133 110 122 106Z" fill="#8c98c8"/>
<path d="M175 105 Q190 110 196 128 L189 131 Q184 116 170 110Z" fill="#94a6d0"/>
<path d="M52 110 Q58 114 59 120 L56 121 Q54 115 49 112Z" fill="#9c9ac6"/>
<path d="M97 121 Q104 124 106 130 L102 131 Q100 126 94 123Z" fill="#9ca6cc"/>
<path d="M150 125 Q160 130 163 144 L158 146 Q155 134 146 129Z" fill="#9eb0d6"/>
<rect width="269" height="187" fill="url(#tint)"/>
</svg><div class="abs" style="left:304.0px;top:755.8px;white-space:pre;font-family:'Liberation Sans',sans-serif;font-size:6px;line-height:9px;font-weight:bold;color:#ac9f95;letter-spacing:.25px;-webkit-text-stroke:0.2px #ac9f95">BUILD TOOL</div><div class="abs" style="left:304.0px;top:766.5px;white-space:pre;font-family:'Liberation Sans',sans-serif;font-size:19.5px;line-height:22px;font-weight:bold;color:#52769a;letter-spacing:-0.7px;-webkit-text-stroke:0.35px #52769a">Through the pipeline: An</div><div class="abs" style="left:304.0px;top:786.0px;white-space:pre;font-family:'Liberation Sans',sans-serif;font-size:19.5px;line-height:22px;font-weight:bold;color:#52769a;letter-spacing:-0.7px;-webkit-text-stroke:0.35px #52769a">exploration of front-end</div><div class="abs" style="left:527.8px;top:759.0px;width:24.0px;height:24.0px;border-radius:50%;border:1.5px solid #b4cfeb;background:#a6c8ea"></div><svg class="abs" style="left:532px;top:763px" width="16" height="16" viewBox="0 0 16 16"><path d="M3.5 10 L8 5.5 L12.5 10" fill="none" stroke="#90aecb" stroke-width="1.2"/></svg><svg class="abs" style="left:9.799999999999955px;top:129px" width="548.7" height="677"><g stroke="#8a2be2" stroke-width="1.2" stroke-dasharray="4 2.5" fill="none"><line x1="0.5" y1="0.0" x2="0.5" y2="677.0"/><line x1="548.7" y1="0.0" x2="548.7" y2="677.0"/><line x1="0.0" y1="0.5" x2="548.7" y2="0.5"/><line x1="270.2" y1="0.0" x2="270.2" y2="677.0"/><line x1="279.2" y1="0.0" x2="279.2" y2="677.0"/><line x1="0.0" y1="413.7" x2="548.7" y2="413.7"/><line x1="0.0" y1="422.8" x2="548.7" y2="422.8"/></g></svg></div></div></div></body></html>
